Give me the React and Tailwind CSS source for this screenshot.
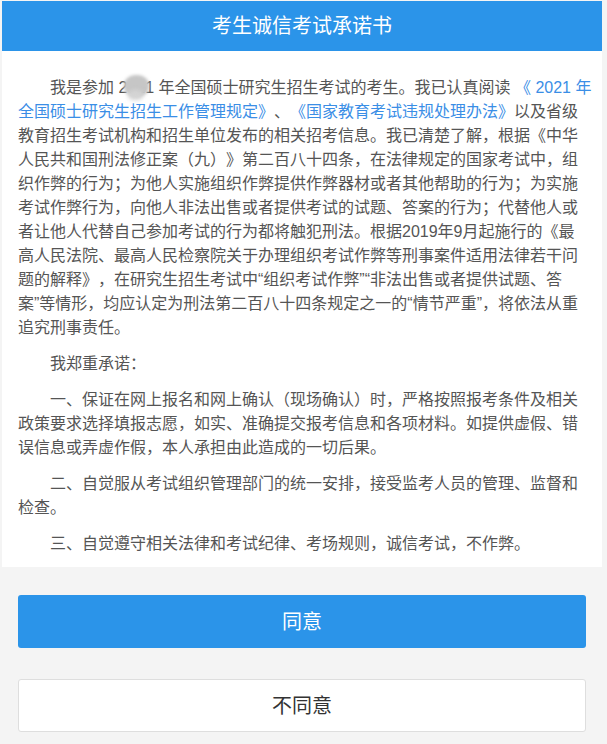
import React from "react";

const font = { fontFamily: '"Liberation Sans", "Noto Sans CJK SC", sans-serif' };

function Link({ children }) {
  return <span className="text-[#3a8ee6]">{children}</span>;
}

function BlurredYear() {
  return (
    <span className="relative inline-block indent-0">
      2021
      <span className="pointer-events-none absolute left-[6px] top-[-1px] h-[22px] w-[25px] rounded-[45%] bg-[#c6c6c6] blur-[1.5px]" />
      <span className="pointer-events-none absolute left-[10px] top-[14px] h-[10px] w-[15px] rounded-full bg-[#d4d4d4] blur-[2px]" />
    </span>
  );
}

export default function App() {
  return (
    <div className="min-h-screen bg-[#f4f4f4]" style={font}>
      <div className="ml-[2px] w-[600px] pt-px pb-6">
        <header className="flex h-[50px] items-center justify-center bg-[#2b94e9] text-[20px] text-white">
          考生诚信考试承诺书
        </header>

        <section className="bg-white pl-[16px] pr-[4px] pt-[25px] pb-[11px] text-[16px] leading-[24px] text-[#555] [text-spacing-trim:space-all]">
          <p className="indent-[2em]">
            我是参加 <BlurredYear /> 年全国硕士研究生招生考试的考生。我已认真阅读 <Link>《 2021 年</Link>
            <br />
            <Link>全国硕士研究生招生工作管理规定》</Link>、<Link>《国家教育考试违规处理办法》</Link>以及省级
            <br />
            教育招生考试机构和招生单位发布的相关招考信息。我已清楚了解，根据《中华
            <br />
            人民共和国刑法修正案（九）》第二百八十四条，在法律规定的国家考试中，组
            <br />
            织作弊的行为；为他人实施组织作弊提供作弊器材或者其他帮助的行为；为实施
            <br />
            考试作弊行为，向他人非法出售或者提供考试的试题、答案的行为；代替他人或
            <br />
            者让他人代替自己参加考试的行为都将触犯刑法。根据2019年9月起施行的《最
            <br />
            高人民法院、最高人民检察院关于办理组织考试作弊等刑事案件适用法律若干问
            <br />
            题的解释》，在研究生招生考试中“组织考试作弊”“非法出售或者提供试题、答
            <br />
            案”等情形，均应认定为刑法第二百八十四条规定之一的“情节严重”，将依法从重
            <br />
            追究刑事责任。
          </p>
          <p className="mt-[12px] indent-[2em]">我郑重承诺：</p>
          <p className="mt-[12px] indent-[2em]">
            一、保证在网上报名和网上确认（现场确认）时，严格按照报考条件及相关
            <br />
            政策要求选择填报志愿，如实、准确提交报考信息和各项材料。如提供虚假、错
            <br />
            误信息或弄虚作假，本人承担由此造成的一切后果。
          </p>
          <p className="mt-[12px] indent-[2em]">
            二、自觉服从考试组织管理部门的统一安排，接受监考人员的管理、监督和
            <br />
            检查。
          </p>
          <p className="mt-[12px] indent-[2em]">
            三、自觉遵守相关法律和考试纪律、考场规则，诚信考试，不作弊。
          </p>
        </section>

        <div className="mx-[16px] mt-[28px] flex flex-col">
          <button className="flex h-[53px] items-center justify-center rounded-[3px] bg-[#2b94e9] text-[20px] text-white">
            同意
          </button>
          <button className="mt-[31px] flex h-[53px] items-center justify-center rounded-[3px] border border-[#dedede] bg-white text-[20px] text-[#333]">
            不同意
          </button>
        </div>
      </div>
    </div>
  );
}
